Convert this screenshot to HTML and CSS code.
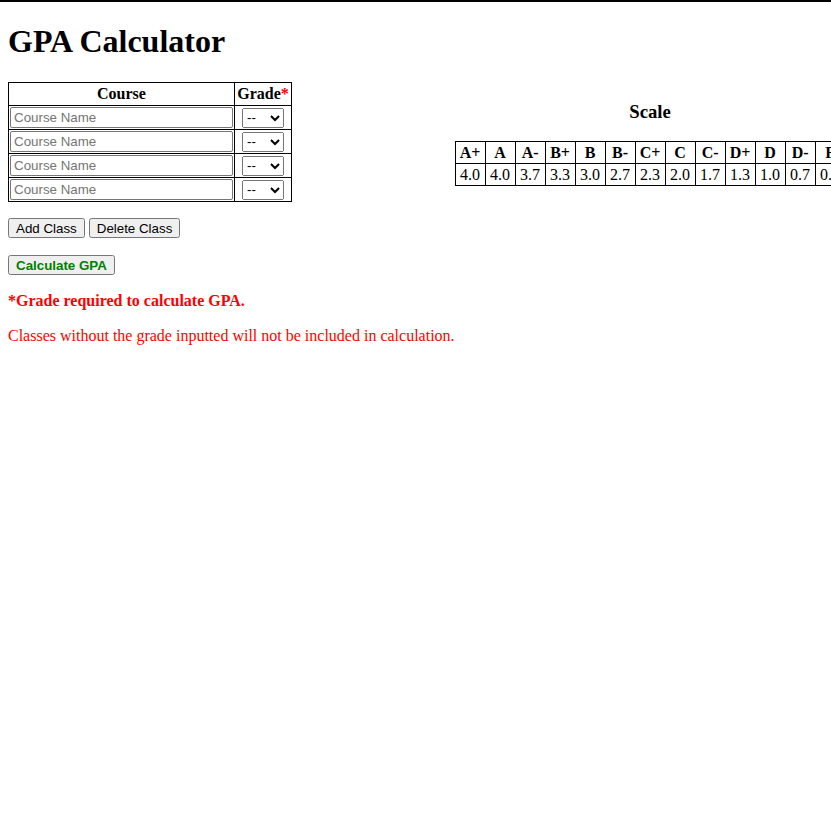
FILE: index.html
```html
<!DOCTYPE html>
<html>
<head>
<meta charset="utf-8">
<title>GPA Calculator</title>
<link rel="stylesheet" href="styles.css">
</head>
<body>
<div class="topbar"></div>
<h1 class="title">GPA Calculator</h1>
<div class="layout">
  <div class="left">
    <table class="courses">
      <thead>
        <tr><th class="course-col">Course</th><th class="grade-col">Grade<span class="req">*</span></th></tr>
      </thead>
      <tbody>
        <tr><td><input class="course-input" type="text" placeholder="Course Name"></td><td class="grade-cell"><select class="grade-select"><option>--</option><option>A+</option><option>A</option></select></td></tr>
        <tr><td><input class="course-input" type="text" placeholder="Course Name"></td><td class="grade-cell"><select class="grade-select"><option>--</option><option>A+</option><option>A</option></select></td></tr>
        <tr><td><input class="course-input" type="text" placeholder="Course Name"></td><td class="grade-cell"><select class="grade-select"><option>--</option><option>A+</option><option>A</option></select></td></tr>
        <tr><td><input class="course-input" type="text" placeholder="Course Name"></td><td class="grade-cell"><select class="grade-select"><option>--</option><option>A+</option><option>A</option></select></td></tr>
      </tbody>
    </table>
    <div class="btn-row">
      <button class="btn">Add Class</button>
      <button class="btn">Delete Class</button>
    </div>
    <div class="btn-row">
      <button class="btn btn-calc">Calculate GPA</button>
    </div>
    <p class="note-bold">*Grade required to calculate GPA.</p>
    <p class="note">Classes without the grade inputted will not be included in calculation.</p>
  </div>
  <div class="right">
    <h3 class="scale-title">Scale</h3>
    <table class="scale">
      <tr><th>A+</th><th>A</th><th>A-</th><th>B+</th><th>B</th><th>B-</th><th>C+</th><th>C</th><th>C-</th><th>D+</th><th>D</th><th>D-</th><th>F</th></tr>
      <tr><td>4.0</td><td>4.0</td><td>3.7</td><td>3.3</td><td>3.0</td><td>2.7</td><td>2.3</td><td>2.0</td><td>1.7</td><td>1.3</td><td>1.0</td><td>0.7</td><td>0.0</td></tr>
    </table>
  </div>
</div>
</body>
</html>
```

FILE: styles.css
```css
html, body {
  overflow: hidden;
}
body {
  margin: 0;
  padding: 0 8px 8px;
  font-family: "Liberation Serif", "Times New Roman", serif;
  font-size: 16px;
  color: #000;
  background: #fff;
}
.topbar {
  height: 2px;
  background: #000;
  margin: 0 -8px;
}
.title {
  font-size: 32px;
  font-weight: bold;
  margin: 21px 0 22px;
}
.layout {
  display: flex;
  align-items: flex-start;
  gap: 0;
}
.left {
  flex: none;
}
.courses {
  border-collapse: collapse;
  border: 1px solid #000;
}
.courses th, .courses td {
  border: 1px solid #000;
  padding: 1px;
}
.courses th {
  font-weight: bold;
  padding: 2px 1px;
  line-height: 18px;
}
.grade-col {
  width: 54px;
}
.req {
  color: red;
}
.course-input {
  width: 223px;
  height: 21px;
  box-sizing: border-box;
  font-family: Arial, "Liberation Sans", sans-serif;
  font-size: 13.333px;
  padding: 1px 3px;
  border: 1px solid #767676;
  border-radius: 2px;
  margin: 0;
  display: block;
}
.grade-cell {
  text-align: center;
  padding: 1px;
}
.grade-select {
  width: 42px;
  height: 20px;
  font-family: Arial, "Liberation Sans", sans-serif;
  font-size: 13.333px;
}
.btn-row {
  display: flex;
  gap: 4px;
}
.btn-row:first-of-type {
  margin-top: 16px;
}
.btn {
  font-family: Arial, "Liberation Sans", sans-serif;
  font-size: 13.333px;
  height: 20px;
  padding: 1px 6px;
  margin: 0;
}
.btn-row + .btn-row {
  margin-top: 17px;
}
.btn-calc {
  color: green;
  font-weight: bold;
}
.note-bold {
  color: red;
  font-weight: bold;
  margin: 17px 0 16px;
}
.note {
  color: red;
  margin: 17px 0 16px;
}
.right {
  flex: none;
  margin-top: 9px;
}
.scale-title {
  text-align: center;
  font-size: 18.72px;
  margin: 10px 0 18px;
}
.scale {
  border-collapse: collapse;
  border: 1px solid #000;
}
.scale th, .scale td {
  border: 1px solid #000;
  width: 21px;
  padding: 2px 4px;
  line-height: 17px;
  text-align: center;
}
```
